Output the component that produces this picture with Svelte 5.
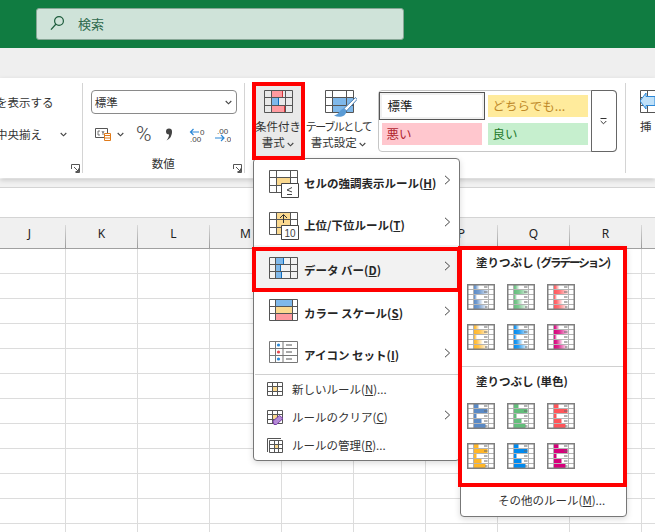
<script>
    const columns = ['J', 'K', 'L', 'M', 'N', 'O', 'P', 'Q', 'R', 'S'];
    const rows = Array.from({length: 12}, (_, i) => i);
    const barWidths = [5, 14, 3, 8, 12];

    const gradientBars = [
        {id: 'g-blue', color: '#5a8ac6'}, {id: 'g-green', color: '#63be7b'}, {id: 'g-red', color: '#ff555a'},
        {id: 'g-orange', color: '#ffb628'}, {id: 'g-sky', color: '#008aef'}, {id: 'g-pink', color: '#d6007b'}
    ];
    const solidBars = gradientBars.map((bar) => ({color: bar.color}));
</script>

{#snippet chevronRight()}
    <svg class="arrow" width="7" height="10" viewBox="0 0 7 10"><path d="M1 .8 5.600 5 1 9.200" fill="none" stroke="#444" stroke-width="1"/></svg>
{/snippet}

{#snippet chevronDown()}
    <svg class="down" width="7" height="5" viewBox="0 0 7 5"><path d="M.7 1 3.500 3.800 6.300 1" fill="none" stroke="#444" stroke-width="1.1"/></svg>
{/snippet}

{#snippet launcher()}
    <svg class="launcher" width="9" height="9" viewBox="0 0 9 9"><path d="M.5 5V.5H8.500V8.500H4.500M3 3 7.500 7.500M7.500 4.500V7.500H4.500" fill="none" stroke="#555" stroke-width="1"/></svg>
{/snippet}

{#snippet gridLines()}
    <path d="M.5.5H28.500V22.500H.5ZM7.500.5V22.500M21.500.5V22.500M.5 7.500H28.500M.5 15.500H28.500" fill="none" stroke="#555" stroke-width="1"/>
{/snippet}

{#snippet dataBar(bar)}
    <svg class="bar-icon" width="28" height="26" viewBox="0 0 28 26">
        {#if bar.id}
            <defs>
                <linearGradient id={bar.id}>
                    <stop offset="0" stop-color={bar.color}/>
                    <stop offset=".35" stop-color={bar.color} stop-opacity=".85"/>
                    <stop offset="1" stop-color={bar.color} stop-opacity=".05"/>
                </linearGradient>
            </defs>
        {/if}
        {#each barWidths as w, i}
            <rect x="6.500" y={1 + i * 5} width={w * (bar.id ? 1.15 : 1)} height="4.500" fill={bar.id ? `url(#${bar.id})` : bar.color}/>
        {/each}
        <path d="M1 5.500H27M1 10.500H27M1 15.500H27M1 20.500H27M6.500 1V25M21.500 1V25" fill="none" stroke="#b3b3b3" stroke-width="1"/>
        <path d="M17 3H20.500M17 8H20.500M17 13H20.500M17 18H20.500M18 23H20.500" fill="none" stroke="#666" stroke-width="1"/>
        <rect x=".75" y=".75" width="26.500" height="24.500" fill="none" stroke="#7f7f7f" stroke-width="1.500"/>
    </svg>
{/snippet}

<div class="window">
    <header class="title-bar">
        <div class="search">
            <svg width="15" height="16" viewBox="0 0 15 16"><circle cx="9" cy="6" r="4.400" fill="none" stroke="#1d5c3c" stroke-width="1.200"/><path d="M5.800 9.300 1 14.600" stroke="#1d5c3c" stroke-width="1.300"/></svg>
            <span>検索</span>
        </div>
    </header>
    <div class="tabs"></div>

    <section class="ribbon">
        <div class="group align-group">
            <div class="align-row first">を表示する</div>
            <div class="align-row">中央揃え {@render chevronDown()}</div>
            <div class="group-foot">{@render launcher()}</div>
        </div>

        <div class="group number-group">
            <div class="combo"><span>標準</span>{@render chevronDown()}</div>
            <div class="number-tools">
                <svg class="format" width="16" height="13" viewBox="0 0 16 13">
                    <path d="M.5.5H12.500V9.500H.5Z" fill="#fff" stroke="#555"/>
                    <path d="M3 3H5M3 3V7H5M7 3 8 5 9 3M8 5V7" fill="none" stroke="#555" stroke-width=".8"/>
                    <path d="M9.500 5.500H15.500V12.500H9.500Z" fill="#fff" stroke="#e07b1a"/>
                    <path d="M9.500 7.500H15.500M9.500 10H15.500" stroke="#e07b1a"/>
                </svg>
                {@render chevronDown()}
                <span class="percent">%</span>
                <svg class="comma" width="8" height="13" viewBox="0 0 8 13"><circle cx="4" cy="3.500" r="3" fill="#444"/><path d="M7 3.500C7 8 5 11 1.500 12.500 3.500 10 4.200 8 4 6Z" fill="#444"/></svg>
                <svg class="decimal first-dec" width="16" height="15" viewBox="0 0 16 15">
                    <path d="M10 5H1.500M4.500 2 1.500 5 4.500 8" fill="none" stroke="#2b88d8" stroke-width="1.200"/>
                    <text x="11" y="7.500">0</text>
                    <text x="1" y="14.500">.00</text>
                </svg>
                <svg class="decimal" width="16" height="15" viewBox="0 0 16 15">
                    <text x="2" y="6.500">.00</text>
                    <path d="M0 11H9M6 8 9 11 6 14" fill="none" stroke="#2b88d8" stroke-width="1.200"/>
                    <text x="9.500" y="14.500">.0</text>
                </svg>
            </div>
            <div class="group-foot"><span class="group-name">数値</span>{@render launcher()}</div>
        </div>

        <div class="group styles-group">
            <button class="big-button cond">
                <svg width="29" height="23" viewBox="0 0 29 23">
                    <path d="M7.500.5H18.500V7.500H7.500Z" fill="#ff9a9f" stroke="#d13438"/>
                    <path d="M7.500 7.500H14.500V15.500H7.500Z" fill="#7fb8ea" stroke="#0f6cbd"/>
                    <path d="M7.500 15.500H20.500V22.500H7.500Z" fill="#ff9a9f" stroke="#d13438"/>
                    {@render gridLines()}
                </svg>
                <span class="big-label">条件付き<br>書式 {@render chevronDown()}</span>
            </button>
            <button class="big-button table">
                <svg class="table-icon" width="32" height="29" viewBox="0 0 32 29">
                    <path d="M8 8H28V22H8Z" fill="#7fb8ea"/>
                    {@render gridLines()}
                    <path d="M30.500 7.500 19 18.500 21.500 21 32 9.500Z" fill="#fff" stroke="#4a7fb5"/>
                    <path d="M18.500 18.500C14 20 15 24 9 25.500 14 28 21 27 21.500 21Z" fill="#5a9bd5"/>
                </svg>
                <span class="big-label"><span class="squeezed">テーブルとして</span><br>書式設定 {@render chevronDown()}</span>
            </button>

            <div class="gallery">
                <div class="style-grid">
                    <div class="style normal">標準</div>
                    <div class="style neutral">どちらでも...</div>
                    <div class="style bad">悪い</div>
                    <div class="style good">良い</div>
                </div>
                <div class="gallery-more">
                    <svg width="7" height="7" viewBox="0 0 7 7"><path d="M.5.5H6.500M.7 3 3.500 5.800 6.300 3" fill="none" stroke="#333" stroke-width="1"/></svg>
                </div>
            </div>
        </div>

        <div class="group cells-group">
            <svg width="15" height="23" viewBox="0 0 15 23">
                <path d="M.5.5H15M.5.5V22.500H15M.5 7.500H15M.5 15.500H15M7.500.5V22.500" fill="none" stroke="#555"/>
                <path d="M15 8V6.500H6V3L0 11 6 19V15.500H15Z" fill="#bfe0f8" stroke="#2b88d8"/>
            </svg>
            <span class="big-label">挿</span>
        </div>
    </section>

    <div class="formula-gap"></div>
    <div class="formula-bar"></div>

    <div class="sheet">
        <div class="col-headers">
            {#each columns as col}
                <div class="col-head">{col}</div>
            {/each}
        </div>
        {#each rows as row (row)}
            <div class="sheet-row">
                {#each columns as col}
                    <div class="cell"></div>
                {/each}
            </div>
        {/each}
    </div>

    <nav class="menu">
        <div class="item">
            <svg class="item-icon lower" width="30" height="28" viewBox="0 0 30 28">
                <path d="M7.500 7.500H21.500V15.500H7.500Z" fill="#fbd98f" stroke="#e8891f"/>
                {@render gridLines()}
                <path d="M12.500 13.500H29.500V27.500H12.500Z" fill="#fff" stroke="#444"/>
                <path d="M23 17.500 18 20 23 22M18 24.500H23" fill="none" stroke="#444"/>
            </svg>
            <span class="item-label down-1">セルの強調表示ルール(<u>H</u>)</span>
            {@render chevronRight()}
        </div>
        <div class="item">
            <svg class="item-icon lower" width="30" height="28" viewBox="0 0 30 28">
                <path d="M7.500.5H21.500V22.500H7.500Z" fill="#fbd98f" stroke="#e8891f"/>
                {@render gridLines()}
                <path d="M14.500 11V3M11 6 14.500 2.500 18 6" fill="none" stroke="#333"/>
                <path d="M12.500 13.500H29.500V27.500H12.500Z" fill="#fff" stroke="#444"/>
                <text class="ten" x="15.500" y="24.500">10</text>
            </svg>
            <span class="item-label down-1">上位/下位ルール(<u>T</u>)</span>
            {@render chevronRight()}
        </div>
        <div class="item active">
            <svg class="item-icon" width="30" height="28" viewBox="0 0 30 28">
                <path d="M6.500 3.500H14.500V10.500H6.500Z M6.500 10.500H11.500V17.500H6.500Z M6.500 17.500H12.500V24.500H6.500Z" fill="#7fb8ea" stroke="#0f6cbd"/>
                <path d="M.5 3.500H28.500V24.500H.5ZM6.500 3.500V24.500M21.500 3.500V24.500M.5 10.500H28.500M.5 17.500H28.500" fill="none" stroke="#555"/>
            </svg>
            <span class="item-label down-2">データ バー(<u>D</u>)</span>
            {@render chevronRight()}
        </div>
        <div class="item after-active">
            <svg class="item-icon higher" width="30" height="28" viewBox="0 0 30 28">
                <path d="M6.500 3.500H23.500V10.500H6.500Z" fill="#7fb8ea" stroke="#0f6cbd"/>
                <path d="M6.500 10.500H23.500V17.500H6.500Z" fill="#fbd98f" stroke="#e8891f"/>
                <path d="M6.500 17.500H23.500V24.500H6.500Z" fill="#ff9a9f" stroke="#d13438"/>
                <path d="M.5 3.500H28.500V24.500H.5ZM6.500 3.500V24.500M23.500 3.500V24.500M.5 10.500H28.500M.5 17.500H28.500" fill="none" stroke="#555"/>
            </svg>
            <span class="item-label">カラー スケール(<u>S</u>)</span>
            {@render chevronRight()}
        </div>
        <div class="item last-big">
            <svg class="item-icon higher" width="30" height="28" viewBox="0 0 30 28">
                <path d="M.5 3.500H28.500V24.500H.5ZM6.500 3.500V24.500M14 3.500V24.500M.5 10.500H28.500M.5 17.500H28.500" fill="none" stroke="#777"/>
                <circle cx="9.500" cy="7" r="1.600" fill="#2b88d8"/>
                <circle cx="9.500" cy="14" r="1.600" fill="#e8474c"/>
                <circle cx="9.500" cy="21" r="1.600" fill="#2b88d8"/>
                <path d="M17 7H23M17 14H23M17 21H23" stroke="#555"/>
            </svg>
            <span class="item-label">アイコン セット(<u>I</u>)</span>
            {@render chevronRight()}
        </div>
        <div class="separator"></div>
        <div class="item small">
            <svg class="small-icon" width="16" height="14" viewBox="0 0 16 14">
                <path d="M5.500 4.500H10.500V9.500H5.500Z" fill="#fbd98f" stroke="#e8891f"/>
                <path d="M.5.500H15.500V13.500H.5ZM5.500.5V13.500M10.500.5V13.500M.5 4.500H15.500M.5 9.500H15.500" fill="none" stroke="#555"/>
            </svg>
            <span class="small-label">新しいルール(<u>N</u>)...</span>
        </div>
        <div class="item small">
            <svg class="small-icon" width="16" height="15" viewBox="0 0 16 15">
                <path d="M5.500 4.500H10.500V9.500H5.500Z" fill="#fbd98f" stroke="#e8891f"/>
                <path d="M.5.500H15.500V13.500H.5ZM5.500.5V13.500M10.500.5V13.500M.5 4.500H15.500M.5 9.500H15.500" fill="none" stroke="#555"/>
                <path d="M6 11 12.500 5.500 16 8.500 9.500 14.500H7Z" fill="#b58ad6" stroke="#7a3fa8"/>
            </svg>
            <span class="small-label">ルールのクリア(<u>C</u>)</span>
            {@render chevronRight()}
        </div>
        <div class="item small">
            <svg class="small-icon" width="16" height="15" viewBox="0 0 16 15">
                <path d="M.5 14V.5H14" fill="none" stroke="#555"/>
                <path d="M7.500 6.500H11.500V10.500H7.500Z" fill="#fbd98f" stroke="#e8891f"/>
                <path d="M2.500 2.500H15.500V14.500H2.500ZM7.500 2.500V14.500M11.500 2.500V14.500M2.500 6.500H15.500M2.500 10.500H15.500" fill="none" stroke="#555"/>
            </svg>
            <span class="small-label">ルールの管理(<u>R</u>)...</span>
        </div>
    </nav>

    <aside class="submenu">
        <div class="sub-title">塗りつぶし (<span class="tight">グラデーション</span>)</div>
        <div class="bar-grid">
            {#each gradientBars as bar}
                {@render dataBar(bar)}
            {/each}
        </div>
        <div class="separator sub-sep"></div>
        <div class="sub-title">塗りつぶし (単色)</div>
        <div class="bar-grid">
            {#each solidBars as bar}
                {@render dataBar(bar)}
            {/each}
        </div>
        <div class="more-rules">その他のルール(<u>M</u>)...</div>
    </aside>

    <div class="mark mark-button"></div>
    <div class="mark mark-item"></div>
    <div class="mark mark-panel"></div>
</div>

<style>
    :global(body) {
        margin: 0;
    }

    .window {
        position: relative;
        width: 655px;
        height: 532px;
        overflow: hidden;
        background: #fff;
        font-family: "Noto Sans CJK JP", "Noto Sans", sans-serif;
        font-size: 11.5px;
        color: #333;
    }

    .title-bar {
        height: 48px;
        box-sizing: border-box;
        padding: 8px 0 0 36px;
        background: #107c41;
    }

    .search {
        width: 368px;
        height: 32px;
        box-sizing: border-box;
        display: flex;
        align-items: center;
        gap: 13px;
        padding: 0 0 2px 13px;
        background: #cfe3d9;
        border: 1px solid #86a695;
        border-radius: 3px;
        font-size: 13px;
        color: #2f6b4e;
    }

    .tabs {
        height: 30px;
        background: #efefef;
    }

    .ribbon {
        position: relative;
        height: 100px;
        display: flex;
        box-sizing: border-box;
        padding-top: 5px;
        background: #fff;
        box-shadow: 0 2px 5px rgba(0, 0, 0, 0.18);
    }

    .group {
        position: relative;
        height: 90px;
        box-sizing: border-box;
        border-right: 1px solid #d4d4d4;
    }

    .align-group {
        width: 83px;
    }

    .align-row {
        display: flex;
        align-items: center;
        height: 32px;
        white-space: nowrap;
        gap: 18px;
        margin-left: -4px;
    }

    .align-row.first {
        margin-top: 3px;
    }

    .group-foot {
        position: absolute;
        left: 0;
        right: 0;
        bottom: 0;
        height: 20px;
        display: flex;
        justify-content: center;
        align-items: center;
    }

    .launcher {
        position: absolute;
        right: 2px;
        bottom: 0;
    }

    .number-group {
        width: 162px;
        padding: 7px 0 0 8px;
    }

    .combo {
        width: 146px;
        height: 24px;
        box-sizing: border-box;
        display: flex;
        align-items: center;
        justify-content: space-between;
        padding: 0 4px 0 3px;
        border: 1px solid #8a8a8a;
        border-radius: 4px;
    }

    .number-tools {
        display: flex;
        align-items: center;
        height: 26px;
        margin-top: 7px;
        padding-left: 4px;
    }

    .format {
        margin-right: 6px;
    }

    .percent {
        width: 20px;
        margin-left: 10px;
        text-align: center;
        font-family: Roboto, sans-serif;
        font-weight: 300;
        font-size: 21px;
        line-height: 24px;
        color: #444;
    }

    .comma {
        margin-left: 11px;
    }

    .decimal {
        margin-left: 10px;
    }

    .decimal.first-dec {
        margin-left: 16px;
    }

    .decimal text {
        font-family: "Liberation Sans", sans-serif;
        font-size: 8px;
        fill: #444;
    }

    .styles-group {
        width: 382px;
        padding-left: 7px;
        display: flex;
    }

    .big-button {
        display: flex;
        flex-direction: column;
        align-items: center;
        border: 0;
        background: none;
        padding: 0;
        font: inherit;
        color: inherit;
    }

    .big-button.cond {
        width: 53px;
        height: 78px;
        margin-top: -1px;
        padding-top: 8px;
        background: #e9e9e9;
    }

    .big-button.table {
        width: 66px;
        padding-top: 7px;
        margin-left: 1px;
    }

    .table-icon {
        margin-bottom: -6px;
        margin-left: 4px;
    }

    .big-label {
        display: block;
        margin-top: 5px;
        line-height: 16px;
        text-align: center;
        white-space: nowrap;
    }

    .squeezed {
        font-size: 11px;
        letter-spacing: -1.5px;
    }

    .gallery {
        display: flex;
        height: 62px;
        box-sizing: border-box;
        margin: 7px 0 0 6px;
        width: 239px;
        border: 1px solid #c6c6c6;
        border-radius: 4px;
    }

    .style-grid {
        flex: 1;
        display: grid;
        grid-template-columns: 100px 100px;
        grid-template-rows: 22px 22px;
        column-gap: 6px;
        row-gap: 6px;
        padding: 4px 0 0 3px;
    }

    .style {
        display: flex;
        align-items: center;
        padding: 0 0 2px 5px;
        font-size: 12.5px;
    }

    .normal {
        margin: -3px;
        padding-left: 8px;
        background: #fff;
        color: #222;
        border: 1px solid #555;
        outline: 2px solid #f0f0f0;
        outline-offset: -3px;
    }

    .neutral {
        background: #ffeb9c;
        color: #c08a2a;
    }

    .bad {
        background: #ffc7ce;
        color: #b0232e;
    }

    .good {
        background: #c6efce;
        color: #1f7a2c;
    }

    .gallery-more {
        width: 24px;
        margin: -1px;
        display: flex;
        align-items: center;
        justify-content: center;
        border: 1px solid #666;
        border-radius: 0 4px 4px 0;
    }

    .cells-group {
        border: 0;
        display: flex;
        flex-direction: column;
        padding: 7px 0 0 14px;
    }

    .cells-group .big-label {
        margin-top: 5px;
        text-align: left;
    }

    .formula-gap {
        height: 9px;
        background: #f1f1f1;
        border-bottom: 1px solid #d4d4d4;
        box-sizing: border-box;
        margin-top: 1px;
    }

    .formula-bar {
        height: 30px;
        box-sizing: border-box;
        background: #fff;
        border-bottom: 1px solid #d4d4d4;
    }

    .sheet {
        margin-left: -6px;
    }

    .col-headers,
    .sheet-row {
        display: flex;
    }

    .col-headers {
        height: 31px;
        box-sizing: border-box;
        align-items: flex-end;
        background: #f0f0f0;
        border-bottom: 1px solid #a0a0a0;
    }

    .col-head {
        width: 72px;
        height: 23px;
        flex: none;
        box-sizing: border-box;
        display: flex;
        align-items: center;
        justify-content: center;
        padding-bottom: 7px;
        border-right: 1px solid;
        border-image: linear-gradient(#dcdcdc, #999) 1;
        font-family: "Noto Sans", sans-serif;
        font-size: 12px;
        color: #222;
    }

    .sheet-row {
        height: 25px;
    }

    .cell {
        width: 72px;
        flex: none;
        box-sizing: border-box;
        border-right: 1px solid #dcdcdc;
        border-bottom: 1px solid #dcdcdc;
    }

    .menu,
    .submenu {
        position: absolute;
        box-sizing: border-box;
        background: #fff;
        border: 1px solid #777;
        border-radius: 4px;
        box-shadow: 0 2px 6px rgba(0, 0, 0, 0.15);
    }

    .menu {
        left: 253px;
        top: 158px;
        width: 207px;
        height: 303px;
        padding-top: 2px;
    }

    .item {
        position: relative;
        height: 42px;
        display: flex;
        align-items: center;
        padding-left: 15px;
    }

    .item.active {
        height: 46px;
        background: #f2f2f2;
    }

    .item.after-active {
        height: 43px;
    }

    .item.last-big {
        height: 41px;
    }

    .item-icon {
        flex: none;
        margin-top: -1px;
    }

    .item-icon.lower {
        margin-top: 3px;
    }

    .item-icon.higher {
        margin-top: -5px;
    }

    .item-label {
        margin-left: 5px;
        font-weight: 700;
        color: #262626;
        white-space: nowrap;
    }

    .item-label.down-1 {
        margin-top: 2px;
    }

    .item-label.down-2 {
        margin-top: 4px;
    }

    .arrow {
        position: absolute;
        right: 8px;
        top: calc(50% - 7px);
    }

    .separator {
        height: 1px;
        background: #d0d0d0;
        margin: -1px 1px 0 1px;
    }

    .item.small {
        height: 28px;
        padding-left: 13px;
    }

    .small-icon {
        flex: none;
    }

    .small-label {
        margin-left: 9px;
        white-space: nowrap;
    }

    .submenu {
        left: 460px;
        top: 246px;
        width: 167px;
        height: 271px;
        padding-top: 6px;
    }

    .sub-title {
        padding-left: 15px;
        line-height: 18px;
        font-weight: 700;
        color: #262626;
        white-space: nowrap;
    }

    .tight {
        letter-spacing: -2px;
    }

    .bar-grid {
        display: grid;
        grid-template-columns: repeat(3, 28px);
        column-gap: 12px;
        row-gap: 14px;
        padding: 13px 0 0 6px;
    }

    .bar-icon {
        display: block;
    }

    .sub-sep {
        margin-top: 16px;
        margin-bottom: 5px;
    }

    .more-rules {
        margin-top: 23px;
        padding-left: 37px;
        white-space: nowrap;
    }

    .ten {
        font-family: "Liberation Sans", sans-serif;
        font-size: 10px;
        fill: #444;
    }

    .mark {
        position: absolute;
        box-sizing: border-box;
        border: 4px solid #f00;
        pointer-events: none;
    }

    .mark-button {
        left: 252px;
        top: 82px;
        width: 53px;
        height: 78px;
    }

    .mark-item {
        left: 252px;
        top: 247px;
        width: 209px;
        height: 45px;
    }

    .mark-panel {
        left: 458px;
        top: 246px;
        width: 169px;
        height: 241px;
    }
</style>
